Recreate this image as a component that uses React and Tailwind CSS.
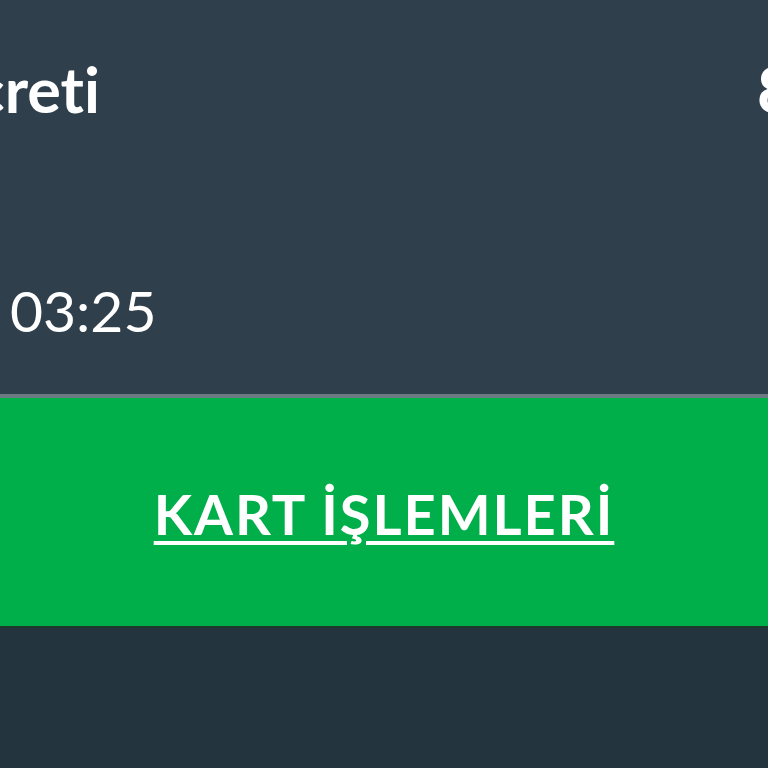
import React from 'react';

const App = () => {
  return (
    <div className="w-[768px] h-[768px] overflow-hidden bg-[#24343e] font-['Lato','Noto_Sans',sans-serif] text-white [font-variant-ligatures:none]">
      {/* ticket details */}
      <div className="h-[394px] bg-[#2f3f4b] flex flex-col">
        <div className="flex items-baseline pt-[57px] leading-none">
          <div className="w-[100px] shrink-0 flex justify-end">
            <span className="whitespace-nowrap text-[63px] font-bold">Ücreti</span>
          </div>
          <span className="ml-[657px] shrink-0 whitespace-nowrap text-[63px] font-bold">8,00 TL</span>
        </div>
        <div className="pt-[162px] pl-[10px] text-[57px] font-normal leading-none">03:25</div>
      </div>
      <div className="h-[4px] bg-[#6b7a82]" />
      {/* action */}
      <button className="w-full h-[230px] bg-[#00af4a] flex items-center justify-center border-b-[2px] border-[#1e3a2c]">
        <span className="text-[56px] font-bold tracking-[0.035em] underline decoration-[4px] underline-offset-[6px] leading-none mt-[4px]">
          KART İŞLEMLERİ
        </span>
      </button>
    </div>
  );
};

export default App;
